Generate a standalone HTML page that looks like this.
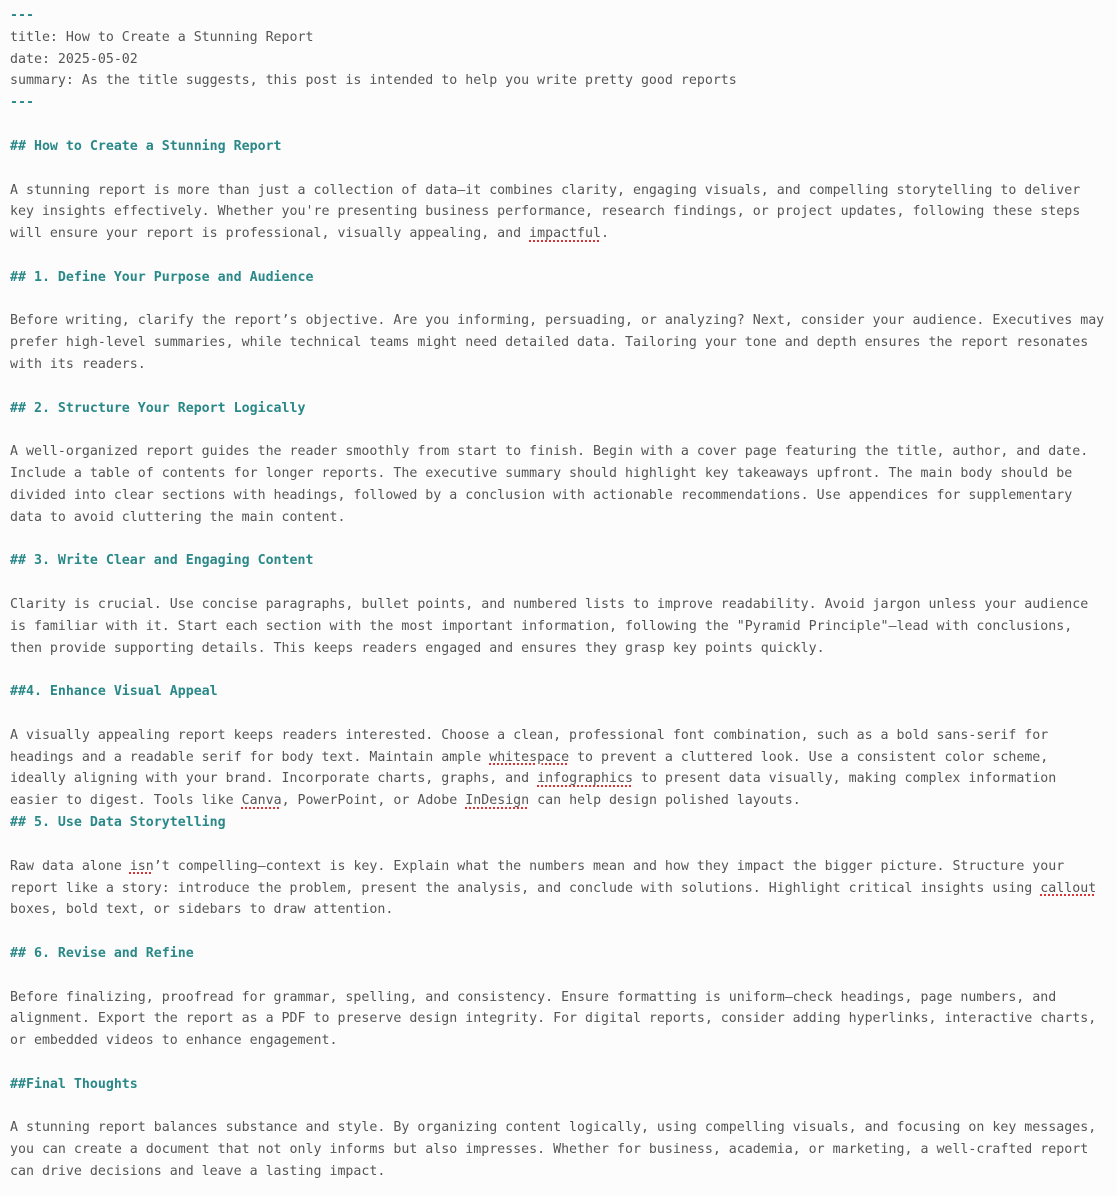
<!DOCTYPE html>
<html><head><meta charset="utf-8"><style>
html,body{margin:0;padding:0;background:#fcfcfd;}
pre{margin:0;padding:5px 0 0 10px;font-family:"DejaVu Sans Mono","Liberation Mono",monospace;font-size:13.28px;line-height:21.81px;color:#555;white-space:pre;}
.h{color:#2a8888;font-weight:bold;}
.s{text-decoration:underline dotted #d33;text-decoration-thickness:2px;text-underline-offset:3px;}
</style></head><body><pre><span class="h">---</span>
title: How to Create a Stunning Report
date: 2025-05-02
summary: As the title suggests, this post is intended to help you write pretty good reports
<span class="h">---</span>

<span class="h">## How to Create a Stunning Report</span>

A stunning report is more than just a collection of data—it combines clarity, engaging visuals, and compelling storytelling to deliver
key insights effectively. Whether you're presenting business performance, research findings, or project updates, following these steps
will ensure your report is professional, visually appealing, and <span class="s">impactful</span>.

<span class="h">## 1. Define Your Purpose and Audience</span>

Before writing, clarify the report’s objective. Are you informing, persuading, or analyzing? Next, consider your audience. Executives may
prefer high-level summaries, while technical teams might need detailed data. Tailoring your tone and depth ensures the report resonates
with its readers.

<span class="h">## 2. Structure Your Report Logically</span>

A well-organized report guides the reader smoothly from start to finish. Begin with a cover page featuring the title, author, and date.
Include a table of contents for longer reports. The executive summary should highlight key takeaways upfront. The main body should be
divided into clear sections with headings, followed by a conclusion with actionable recommendations. Use appendices for supplementary
data to avoid cluttering the main content.

<span class="h">## 3. Write Clear and Engaging Content</span>

Clarity is crucial. Use concise paragraphs, bullet points, and numbered lists to improve readability. Avoid jargon unless your audience
is familiar with it. Start each section with the most important information, following the "Pyramid Principle"—lead with conclusions,
then provide supporting details. This keeps readers engaged and ensures they grasp key points quickly.

<span class="h">##4. Enhance Visual Appeal</span>

A visually appealing report keeps readers interested. Choose a clean, professional font combination, such as a bold sans-serif for
headings and a readable serif for body text. Maintain ample <span class="s">whitespace</span> to prevent a cluttered look. Use a consistent color scheme,
ideally aligning with your brand. Incorporate charts, graphs, and <span class="s">infographics</span> to present data visually, making complex information
easier to digest. Tools like <span class="s">Canva</span>, PowerPoint, or Adobe <span class="s">InDesign</span> can help design polished layouts.
<span class="h">## 5. Use Data Storytelling</span>

Raw data alone <span class="s">isn</span>’t compelling—context is key. Explain what the numbers mean and how they impact the bigger picture. Structure your
report like a story: introduce the problem, present the analysis, and conclude with solutions. Highlight critical insights using <span class="s">callout</span>
boxes, bold text, or sidebars to draw attention.

<span class="h">## 6. Revise and Refine</span>

Before finalizing, proofread for grammar, spelling, and consistency. Ensure formatting is uniform—check headings, page numbers, and
alignment. Export the report as a PDF to preserve design integrity. For digital reports, consider adding hyperlinks, interactive charts,
or embedded videos to enhance engagement.

<span class="h">##Final Thoughts</span>

A stunning report balances substance and style. By organizing content logically, using compelling visuals, and focusing on key messages,
you can create a document that not only informs but also impresses. Whether for business, academia, or marketing, a well-crafted report
can drive decisions and leave a lasting impact.
</pre></body></html>
